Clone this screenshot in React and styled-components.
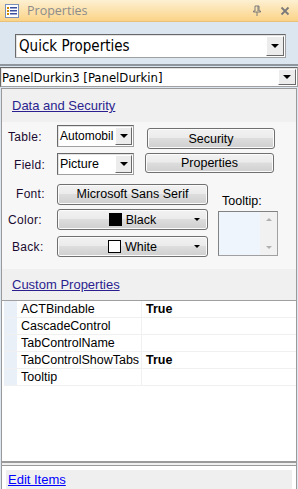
import styled, { createGlobalStyle } from 'styled-components'

const Global = createGlobalStyle`
  html, body { margin: 0; padding: 0; background: #ffffff; }
  body { font-family: "Liberation Sans", Arial, sans-serif; }
`

const Window = styled.div`
  width: 298px;
  height: 489px;
  display: flex;
  flex-direction: column;
  overflow: hidden;
  background: #dce6f0;
`

const TitleBar = styled.div`
  height: 22px;
  flex: none;
  display: flex;
  align-items: center;
  padding: 0 6px 0 5px;
  gap: 8px;
  background: linear-gradient(#fdf0d2, #fbd387);
  border-bottom: 1px solid #e9c27a;
  box-sizing: border-box;
`

const Title = styled.div`
  flex: 1;
  font-family: "Open Sans", "Noto Sans", sans-serif;
  font-size: 12.5px;
  color: #8c8c8c;
`

const TitleButton = styled.div`
  width: 14px;
  display: flex;
  justify-content: center;
  margin-left: 6px;
`

const QuickArea = styled.div`
  flex: none;
  height: 44px;
  padding: 12px 12px 0 15px;
  box-sizing: border-box;
  border-bottom: 2px solid #8f959c;
`

const Combo = styled.div`
  display: flex;
  align-items: stretch;
  box-sizing: border-box;
  width: ${p => p.w || 'auto'};
  height: ${p => p.h}px;
  background: #fff;
  border: 1px solid #a0a0a0;
  border-top-color: #696969;
  border-left-color: #696969;
  box-shadow: inset 1px 1px 0 #e3e3e3;
`

const ComboText = styled.div`
  flex: 1;
  display: flex;
  align-items: center;
  padding-left: ${p => p.pad || 2}px;
  font-size: ${p => p.size}px;
  font-family: ${p => p.font || '"Liberation Sans", Arial, sans-serif'};
  color: #000;
  white-space: nowrap;
  overflow: hidden;
`

const ComboButton = styled.div`
  width: ${p => p.w || 16}px;
  margin: 1px 1px 1px 0;
  display: flex;
  align-items: center;
  justify-content: center;
  background: #ececec;
  border: 1px solid;
  border-color: #fff #6a6a6a #6a6a6a #fff;
`

const DownArrow = styled.div`
  width: 0;
  height: 0;
  border-left: 4px solid transparent;
  border-right: 4px solid transparent;
  border-top: 4px solid #000;
`

const ObjectRow = styled.div`
  flex: none;
  background: #dce6f0;
  padding-top: 1px;
`

const Panel = styled.div`
  flex: 1;
  display: flex;
  flex-direction: column;
  margin: 1px 1px 0 1px;
  border: 1px solid #9a9a9a;
  border-bottom: none;
  background: #f0f0f0;
  min-height: 0;
`

const SectionHeader = styled.div`
  height: ${p => p.h}px;
  flex: none;
  display: flex;
  align-items: center;
  padding-left: 10px;
  box-sizing: border-box;
`

const HeaderLink = styled.a`
  font-size: 13px;
  color: #2b1f8f;
  text-decoration: underline;
  cursor: pointer;
`

const DataBody = styled.div`
  flex: none;
  background: #f7f7f7;
  height: 147px;
  padding-top: 3px;
  box-sizing: border-box;
`

const Row = styled.div`
  display: flex;
  align-items: ${p => p.align || 'center'};
  height: ${p => p.h}px;
  margin-bottom: ${p => p.mb || 0}px;
`

const Label = styled.div`
  width: ${p => 55 - p.indent}px;
  padding-left: ${p => p.indent}px;
  padding-top: ${p => p.top || 0}px;
  font-size: 12px;
  color: #1a0a30;
  letter-spacing: 0.3px;
`

const Button = styled.div`
  box-sizing: border-box;
  width: ${p => p.w}px;
  height: ${p => p.h || 21}px;
  margin-left: ${p => p.ml || 0}px;
  margin-top: ${p => p.mt || 0}px;
  display: flex;
  align-items: center;
  justify-content: center;
  gap: 4px;
  position: relative;
  font-size: 12.5px;
  color: #000;
  border: 1px solid #707070;
  border-radius: 3px;
  background: linear-gradient(#f2f2f2 0%, #ebebeb 45%, #dddddd 50%, #cfcfcf 100%);
  box-shadow: inset 0 0 0 1px #fbfbfb;
`

const Swatch = styled.div`
  width: 13px;
  height: 13px;
  box-sizing: border-box;
  background: ${p => p.color};
  border: 1px solid #000;
`

const ButtonArrow = styled.div`
  position: absolute;
  right: 7px;
  top: 8px;
  border-left: 3px solid transparent;
  border-right: 3px solid transparent;
  border-top: 3px solid #000;
`

const Split = styled.div`
  display: flex;
`

const LeftCol = styled.div`
  display: flex;
  flex-direction: column;
`

const RightCol = styled.div`
  display: flex;
  flex-direction: column;
  margin-left: 10px;
  padding-top: 11px;
`

const TipLabel = styled.div`
  font-size: 12.5px;
  color: #000;
  padding-left: 4px;
  height: 17px;
`

const TipBox = styled.div`
  display: flex;
  width: 60px;
  height: 45px;
  box-sizing: border-box;
  border: 1px solid #a0a0a0;
  border-top-color: #828282;
  border-left-color: #828282;
  background: #eef5fd;
`

const TipScroll = styled.div`
  margin-left: auto;
  width: 17px;
  background: #f1f1f1;
  display: flex;
  flex-direction: column;
  justify-content: space-between;
  align-items: center;
  padding: 6px 0;
  box-sizing: border-box;
`

const ScrollArrow = styled.div`
  border-left: 3px solid transparent;
  border-right: 3px solid transparent;
  ${p => p.up ? 'border-bottom: 3px solid #b0b0b0;' : 'border-top: 3px solid #b0b0b0;'}
`

const Grid = styled.div`
  flex: 1;
  background: #fff;
  border-top: 1px solid #a0a0a0;
  border-bottom: 2px solid #9a9a9a;
  padding-left: 2px;
`

const PropRow = styled.div`
  display: flex;
  height: 17px;
  border-bottom: 1px solid #f0f0f0;
  box-sizing: border-box;
`

const Margin = styled.div`
  width: 13px;
  background: #eaf0f8;
`

const PropName = styled.div`
  width: 120px;
  padding-left: 4px;
  border-right: 1px solid #f0f0f0;
  font-size: 12.5px;
  line-height: 16px;
  color: #000;
  white-space: nowrap;
`

const PropValue = styled.div`
  flex: 1;
  padding-left: 4px;
  font-size: 12.5px;
  line-height: 16px;
  font-weight: ${p => p.bold ? 700 : 400};
  color: #000;
`

const Footer = styled.div`
  flex: none;
  margin-top: 2px;
  border-top: 1px solid #9a9a9a;
  padding: 4px 4px 0 4px;
  background: #fff;
`

const FooterInner = styled.div`
  background: #efefef;
  height: 19px;
  display: flex;
  align-items: center;
  padding-left: 2px;
`

const FooterLink = styled.a`
  font-size: 13px;
  color: #0000ff;
  text-decoration: underline;
`

const props = [
  { name: 'ACTBindable', value: 'True' },
  { name: 'CascadeControl', value: '' },
  { name: 'TabControlName', value: '' },
  { name: 'TabControlShowTabs', value: 'True' },
  { name: 'Tooltip', value: '' }
]

const ListIcon = () => (
  <svg width="14" height="14" viewBox="0 0 14 14">
    <rect x="0.5" y="0.5" width="13" height="13" fill="#fff" stroke="#7a8fb8" />
    <rect x="2" y="3" width="2" height="2" fill="#d08a00" />
    <rect x="2" y="6" width="2" height="2" fill="#d08a00" />
    <rect x="2" y="9" width="2" height="2" fill="#d08a00" />
    <rect x="5" y="3" width="7" height="1.5" fill="#3b4fa0" />
    <rect x="5" y="6" width="7" height="1.5" fill="#3b4fa0" />
    <rect x="5" y="9" width="7" height="1.5" fill="#3b4fa0" />
  </svg>
)

const PinIcon = () => (
  <svg width="10" height="12" viewBox="0 0 10 12">
    <path d="M3 1h4v5h1.5v1h-7v-1h1.5z M6 1v5" fill="none" stroke="#7a7a7a" strokeWidth="1" />
    <path d="M5 7v4" stroke="#7a7a7a" strokeWidth="1" />
  </svg>
)

const CloseIcon = () => (
  <svg width="10" height="10" viewBox="0 0 10 10">
    <path d="M1.5 1.5l7 7M8.5 1.5l-7 7" stroke="#7a7a7a" strokeWidth="1.8" />
  </svg>
)

const App = () => {
  return (
    <Window>
      <Global />
      <TitleBar>
        <ListIcon />
        <Title>Properties</Title>
        <TitleButton><PinIcon /></TitleButton>
        <TitleButton><CloseIcon /></TitleButton>
      </TitleBar>

      <QuickArea>
        <Combo h={24}>
          <ComboText size={15} pad={3} font={'"DejaVu Sans Condensed", "DejaVu Sans", sans-serif'}>Quick Properties</ComboText>
          <ComboButton w={16}><DownArrow /></ComboButton>
        </Combo>
      </QuickArea>

      <ObjectRow>
        <Combo h={20}>
          <ComboText size={13} pad={1} font={'"DejaVu Sans Condensed", "DejaVu Sans", sans-serif'}>PanelDurkin3 [PanelDurkin]</ComboText>
          <ComboButton w={16}><DownArrow /></ComboButton>
        </Combo>
      </ObjectRow>

      <Panel>
        <SectionHeader h={33}>
          <HeaderLink>Data and Security</HeaderLink>
        </SectionHeader>

        <DataBody>
          <Row h={25} mb={3} align="flex-start">
            <Label indent={6} top={5}>Table:</Label>
            <Combo h={22} w="77px">
              <ComboText size={12}>Automobil</ComboText>
              <ComboButton w={15}><DownArrow /></ComboButton>
            </Combo>
            <Button w={128} ml={13} mt={3}>Security</Button>
          </Row>
          <Row h={24} mb={6} align="flex-start">
            <Label indent={12} top={5}>Field:</Label>
            <Combo h={22} w="77px">
              <ComboText size={12.5}>Picture</ComboText>
              <ComboButton w={15}><DownArrow /></ComboButton>
            </Combo>
            <Button w={129} ml={11} h={20}>Properties</Button>
          </Row>
          <Split>
            <LeftCol>
              <Row h={22} mb={4}>
                <Label indent={14}>Font:</Label>
                <Button w={151}>Microsoft Sans Serif</Button>
              </Row>
              <Row h={21} mb={6}>
                <Label indent={6}>Color:</Label>
                <Button w={151}>
                  <Swatch color="#000" />
                  <span>Black</span>
                  <ButtonArrow />
                </Button>
              </Row>
              <Row h={21}>
                <Label indent={10}>Back:</Label>
                <Button w={151}>
                  <Swatch color="#fff" />
                  <span>White</span>
                  <ButtonArrow />
                </Button>
              </Row>
            </LeftCol>
            <RightCol>
              <TipLabel>Tooltip:</TipLabel>
              <TipBox>
                <TipScroll>
                  <ScrollArrow up />
                  <ScrollArrow />
                </TipScroll>
              </TipBox>
            </RightCol>
          </Split>
        </DataBody>

        <SectionHeader h={31}>
          <HeaderLink>Custom Properties</HeaderLink>
        </SectionHeader>

        <Grid>
          {props.map(p => (
            <PropRow key={p.name}>
              <Margin />
              <PropName>{p.name}</PropName>
              <PropValue bold={!!p.value}>{p.value}</PropValue>
            </PropRow>
          ))}
        </Grid>

        <Footer>
          <FooterInner>
            <FooterLink>Edit Items</FooterLink>
          </FooterInner>
        </Footer>
      </Panel>
    </Window>
  )
}

export default App
